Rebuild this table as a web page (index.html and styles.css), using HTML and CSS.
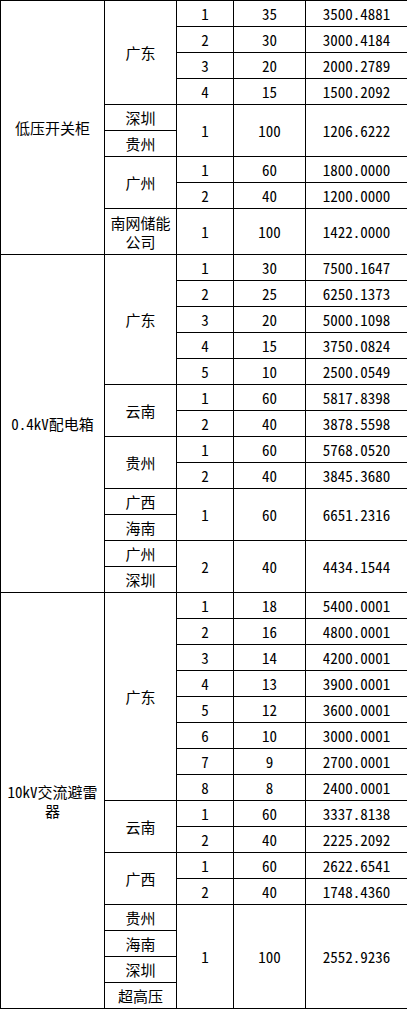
FILE: index.html
```html
<!DOCTYPE html>
<html lang="zh-CN">
<head>
<meta charset="utf-8">
<title>价格表</title>
<link rel="stylesheet" href="styles.css">
</head>
<body>
<table class="sheet">
  <colgroup>
    <col class="c-cat"><col class="c-reg"><col class="c-no"><col class="c-pct"><col class="c-amt">
  </colgroup>
  <tbody>
    <tr><td rowspan="9">低压开关柜</td><td rowspan="4">广东</td><td>1</td><td>35</td><td>3500.4881</td></tr>
    <tr><td>2</td><td>30</td><td>3000.4184</td></tr>
    <tr><td>3</td><td>20</td><td>2000.2789</td></tr>
    <tr><td>4</td><td>15</td><td>1500.2092</td></tr>
    <tr><td>深圳</td><td rowspan="2">1</td><td rowspan="2">100</td><td rowspan="2">1206.6222</td></tr>
    <tr><td>贵州</td></tr>
    <tr><td rowspan="2">广州</td><td>1</td><td>60</td><td>1800.0000</td></tr>
    <tr><td>2</td><td>40</td><td>1200.0000</td></tr>
    <tr class="tall"><td class="wrap">南网储能公司</td><td>1</td><td>100</td><td>1422.0000</td></tr>

    <tr><td rowspan="13">0.4kV配电箱</td><td rowspan="5">广东</td><td>1</td><td>30</td><td>7500.1647</td></tr>
    <tr><td>2</td><td>25</td><td>6250.1373</td></tr>
    <tr><td>3</td><td>20</td><td>5000.1098</td></tr>
    <tr><td>4</td><td>15</td><td>3750.0824</td></tr>
    <tr><td>5</td><td>10</td><td>2500.0549</td></tr>
    <tr><td rowspan="2">云南</td><td>1</td><td>60</td><td>5817.8398</td></tr>
    <tr><td>2</td><td>40</td><td>3878.5598</td></tr>
    <tr><td rowspan="2">贵州</td><td>1</td><td>60</td><td>5768.0520</td></tr>
    <tr><td>2</td><td>40</td><td>3845.3680</td></tr>
    <tr><td>广西</td><td rowspan="2">1</td><td rowspan="2">60</td><td rowspan="2">6651.2316</td></tr>
    <tr><td>海南</td></tr>
    <tr><td>广州</td><td rowspan="2">2</td><td rowspan="2">40</td><td rowspan="2">4434.1544</td></tr>
    <tr><td>深圳</td></tr>

    <tr><td rowspan="16" class="wrap">10kV交流避雷器</td><td rowspan="8">广东</td><td>1</td><td>18</td><td>5400.0001</td></tr>
    <tr><td>2</td><td>16</td><td>4800.0001</td></tr>
    <tr><td>3</td><td>14</td><td>4200.0001</td></tr>
    <tr><td>4</td><td>13</td><td>3900.0001</td></tr>
    <tr><td>5</td><td>12</td><td>3600.0001</td></tr>
    <tr><td>6</td><td>10</td><td>3000.0001</td></tr>
    <tr><td>7</td><td>9</td><td>2700.0001</td></tr>
    <tr><td>8</td><td>8</td><td>2400.0001</td></tr>
    <tr><td rowspan="2">云南</td><td>1</td><td>60</td><td>3337.8138</td></tr>
    <tr><td>2</td><td>40</td><td>2225.2092</td></tr>
    <tr><td rowspan="2">广西</td><td>1</td><td>60</td><td>2622.6541</td></tr>
    <tr><td>2</td><td>40</td><td>1748.4360</td></tr>
    <tr><td>贵州</td><td rowspan="4">1</td><td rowspan="4">100</td><td rowspan="4">2552.9236</td></tr>
    <tr><td>海南</td></tr>
    <tr><td>深圳</td></tr>
    <tr><td>超高压</td></tr>
  </tbody>
</table>
</body>
</html>
```
FILE: styles.css
```css
html, body {
  margin: 0;
  padding: 0;
  background: #fff;
}

.sheet {
  width: 407px;
  table-layout: fixed;
  border-collapse: collapse;
  font-family: "Noto Sans Mono CJK SC", "Noto Sans CJK SC", "Liberation Mono", monospace;
  font-size: 15px;
  font-weight: 300;
  color: #000;
}

.c-cat { width: 104px; }
.c-reg { width: 72px; }
.c-no  { width: 57px; }
.c-pct { width: 72px; }
.c-amt { width: 102px; }

.sheet td {
  border: 1px solid #000;
  height: 25px;
  padding: 0;
  text-align: center;
  vertical-align: middle;
  line-height: 19px;
  white-space: nowrap;
}

.sheet td.wrap {
  white-space: normal;
}

.sheet tr.tall td {
  height: 45px;
}
```
